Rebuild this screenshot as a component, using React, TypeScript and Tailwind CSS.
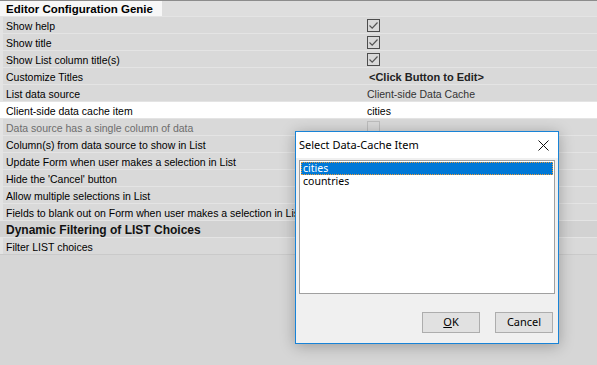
import React from 'react';

type Row = {
  label: string;
  kind: 'check' | 'text' | 'bold' | 'empty';
  value?: string;
  selected?: boolean;
  disabled?: boolean;
};

const rows: Row[] = [
  { label: 'Show help', kind: 'check' },
  { label: 'Show title', kind: 'check' },
  { label: 'Show List column title(s)', kind: 'check' },
  { label: 'Customize Titles', kind: 'bold', value: '<Click Button to Edit>' },
  { label: 'List data source', kind: 'text', value: 'Client-side Data Cache' },
  { label: 'Client-side data cache item', kind: 'text', value: 'cities', selected: true },
  { label: 'Data source has a single column of data', kind: 'check', disabled: true },
  { label: 'Column(s) from data source to show in List', kind: 'empty' },
  { label: 'Update Form when user makes a selection in List', kind: 'empty' },
  { label: "Hide the 'Cancel' button", kind: 'empty' },
  { label: 'Allow multiple selections in List', kind: 'empty' },
  { label: 'Fields to blank out on Form when user makes a selection in List', kind: 'empty' },
];

function CheckBox({ disabled }: { disabled?: boolean }) {
  return (
    <div
      className={`w-[13px] h-[13px] border flex items-center justify-center ${
        disabled ? 'border-[#bdbdbd]' : 'border-[#4d4d4d]'
      }`}
    >
      {!disabled && (
        <svg width="11" height="11" viewBox="0 0 11 11">
          <path d="M1.5 5.5 L4.2 8.2 L9.5 2.5" fill="none" stroke="#555" strokeWidth="1.2" />
        </svg>
      )}
    </div>
  );
}

function GridRow({ row }: { row: Row }) {
  return (
    <div
      className={`flex h-[17px] border-b border-[#e4e4e4] ${
        row.selected ? 'bg-white' : 'bg-[#d9d9d9]'
      }`}
    >
      <div className={`w-[3px] ${row.selected ? 'bg-white' : 'bg-[#e3e3e3]'}`} />
      <div
        className={`w-[362px] pl-[3px] pt-[1px] overflow-hidden whitespace-nowrap leading-[16px] ${
          row.disabled ? 'text-[#6d6d6d]' : 'text-black'
        }`}
      >
        {row.label}
      </div>
      <div className="flex-1 flex items-center pl-[2px] whitespace-nowrap leading-[16px]">
        {row.kind === 'check' && <CheckBox disabled={row.disabled} />}
        {row.kind === 'bold' && (
          <span className="font-bold text-[11px] text-[#222] pl-[2px] pt-[1px]">{row.value}</span>
        )}
        {row.kind === 'text' && (
          <span className={`pt-[1px] ${row.selected ? 'text-black' : 'text-[#333]'}`}>{row.value}</span>
        )}
      </div>
    </div>
  );
}

export default function App() {
  return (
    <div
      className="relative w-[597px] h-[365px] bg-[#d6d6d6] overflow-hidden text-[10.5px]"
      style={{ fontFamily: '"Liberation Sans", Arial, sans-serif' }}
    >
      <div className="border-t border-[#8c8c8c]">
        <div className="flex h-[16px] border-b border-[#e4e4e4] bg-[#dedede]">
          <div className="w-[162px] bg-[#f7f7f7] pl-[6px] font-bold text-[11.5px] leading-[16px] text-black">
            Editor Configuration Genie
          </div>
        </div>
        {rows.map((r) => (
          <GridRow key={r.label} row={r} />
        ))}
        <div className="h-[17px] border-b border-[#e4e4e4] bg-[#d2d2d2] pl-[6px] pt-[1px] font-bold text-[12px] leading-[16px] text-[#111]">
          Dynamic Filtering of LIST Choices
        </div>
        <div className="flex h-[17px] border-b border-[#cacaca] bg-[#d9d9d9]">
          <div className="w-[3px] bg-[#e3e3e3]" />
          <div className="pl-[3px] pt-[1px] leading-[16px]">Filter LIST choices</div>
        </div>
      </div>

      {/* Select Data-Cache Item dialog */}
      <div
        className="absolute left-[295px] top-[131px] w-[264px] h-[213px] border border-[#1883d7] bg-[#f0f0f0] shadow-[0_2px_14px_rgba(0,0,0,0.28)] flex flex-col"
        style={{ fontFamily: '"Noto Sans", "Open Sans", sans-serif' }}
      >
        <div className="h-[26px] bg-white flex items-center justify-between pl-[3px] pr-[9px] text-[11px] text-black">
          <span>Select Data-Cache Item</span>
          <svg width="11" height="11" viewBox="0 0 11 11">
            <path d="M0.5 0.5 L10.5 10.5 M10.5 0.5 L0.5 10.5" stroke="#111" strokeWidth="1" />
          </svg>
        </div>
        <div className="flex-1 px-[3px] pt-[2px]">
          <div className="h-[134px] border border-[#a0a0a0] bg-white p-[1px] text-[10.5px]">
            <div className="h-[13px] leading-[13px] overflow-hidden bg-[#0078d7] text-white pl-[2px] outline-1 outline-dotted outline-[#e79b3a] -outline-offset-1">
              cities
            </div>
            <div className="h-[13px] leading-[13px] overflow-hidden pl-[2px] text-black">countries</div>
          </div>
          <div className="flex justify-end gap-[15px] mt-[18px] pr-[2px]">
            <button className="w-[58px] h-[21px] border border-[#adadad] bg-[#e1e1e1] text-[11px] text-black">
              <span className="underline">O</span>K
            </button>
            <button className="w-[58px] h-[21px] border border-[#adadad] bg-[#e1e1e1] text-[11px] text-black">
              Cancel
            </button>
          </div>
        </div>
      </div>
    </div>
  );
}
